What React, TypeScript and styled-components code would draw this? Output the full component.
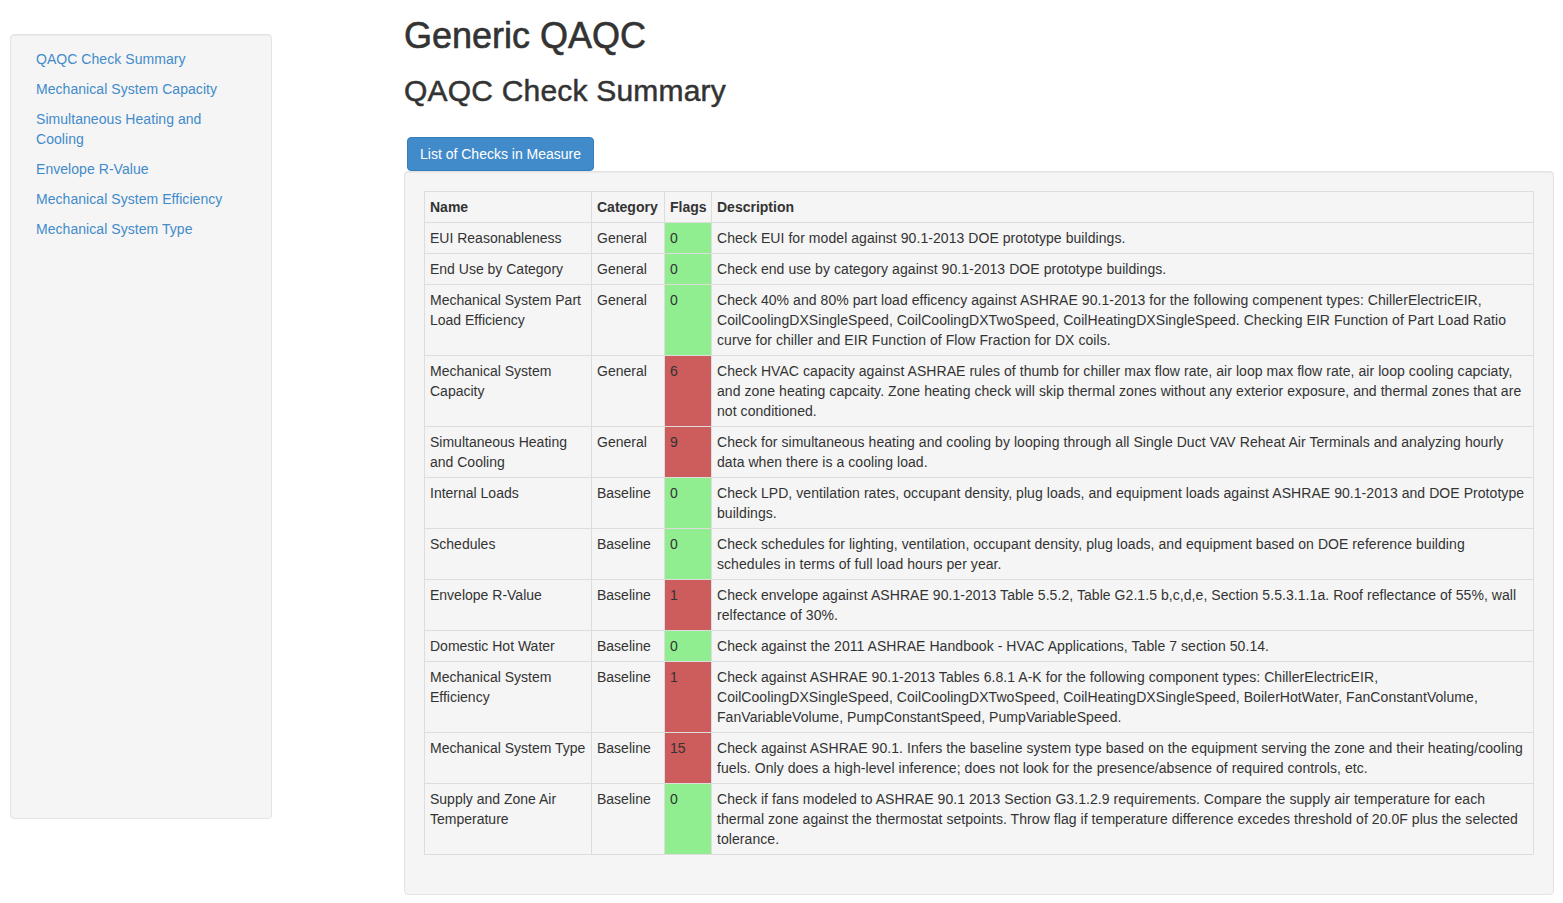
import React from "react";
import styled, { createGlobalStyle } from "styled-components";

const GlobalStyle = createGlobalStyle`
  html, body { margin: 0; padding: 0; background: #fff; }
  body {
    font-family: "Liberation Sans", Arial, Helvetica, sans-serif;
    font-size: 14px;
    line-height: 20px;
    color: #333;
  }
  * { box-sizing: border-box; }
`;

const Page = styled.div`
  display: flex;
  align-items: flex-start;
  padding: 0 9px 0 10px;
  gap: 132px;
`;

const Sidebar = styled.nav`
  flex: 0 0 262px;
  height: 785px;
  margin-top: 34px;
  background: #f5f5f5;
  border: 1px solid #e3e3e3;
  border-radius: 4px;
  box-shadow: inset 0 1px 1px rgba(0, 0, 0, 0.05);
  padding: 9px 0;
`;

const NavList = styled.ul`
  list-style: none;
  margin: 0;
  padding: 0;
  display: flex;
  flex-direction: column;
`;

const NavLink = styled.a`
  display: block;
  padding: 5px 25px;
  color: #428bca;
  text-decoration: none;
  font-size: 14px;
  line-height: 20px;
  letter-spacing: 0.05px;
`;

const Main = styled.main`
  flex: 1;
  min-width: 0;
`;

const Title = styled.h1`
  font-size: 36px;
  line-height: 40px;
  font-weight: 500;
  margin: 16px 0 0;
  color: #333;
  -webkit-text-stroke: 0.6px #333;
`;

const Subtitle = styled.h2`
  font-size: 30px;
  line-height: 33px;
  font-weight: 500;
  margin: 18px 0 0;
  color: #333;
  letter-spacing: 0.2px;
  -webkit-text-stroke: 0.5px #333;
`;

const TabButton = styled.button`
  display: block;
  margin: 30px 0 0 3px;
  height: 34px;
  padding: 6px 12px;
  font-family: inherit;
  font-size: 14px;
  line-height: 20px;
  color: #fff;
  background: #428bca;
  border: 1px solid #357ebd;
  border-radius: 4px;
  cursor: pointer;
`;

const Well = styled.section`
  background: #f5f5f5;
  border: 1px solid #e3e3e3;
  border-radius: 4px;
  box-shadow: inset 0 1px 1px rgba(0, 0, 0, 0.05);
  padding: 19px 19px 39px;
`;

const Table = styled.table`
  width: 100%;
  table-layout: fixed;
  border-collapse: collapse;
  border: 1px solid #ddd;
`;

const Th = styled.th`
  text-align: left;
  font-weight: bold;
  padding: 5px;
  border: 1px solid #ddd;
  vertical-align: top;
  line-height: 20px;
`;

const Td = styled.td`
  padding: 5px;
  border: 1px solid #ddd;
  vertical-align: top;
  line-height: 20px;
`;

const DescCell = styled(Td)`
  letter-spacing: 0.06px;
`;

const FlagCell = styled(Td)<{ $bad: boolean }>`
  background: ${(p) => (p.$bad ? "#cd5c5c" : "#90ee90")};
`;

const navItems = [
  "QAQC Check Summary",
  "Mechanical System Capacity",
  "Simultaneous Heating and Cooling",
  "Envelope R-Value",
  "Mechanical System Efficiency",
  "Mechanical System Type",
];

type Row = { name: string; cat: string; flags: number; desc: string };

const rows: Row[] = [
  { name: "EUI Reasonableness", cat: "General", flags: 0, desc: "Check EUI for model against 90.1-2013 DOE prototype buildings." },
  { name: "End Use by Category", cat: "General", flags: 0, desc: "Check end use by category against 90.1-2013 DOE prototype buildings." },
  { name: "Mechanical System Part Load Efficiency", cat: "General", flags: 0, desc: "Check 40% and 80% part load efficency against ASHRAE 90.1-2013 for the following compenent types: ChillerElectricEIR, CoilCoolingDXSingleSpeed, CoilCoolingDXTwoSpeed, CoilHeatingDXSingleSpeed. Checking EIR Function of Part Load Ratio curve for chiller and EIR Function of Flow Fraction for DX coils." },
  { name: "Mechanical System Capacity", cat: "General", flags: 6, desc: "Check HVAC capacity against ASHRAE rules of thumb for chiller max flow rate, air loop max flow rate, air loop cooling capciaty, and zone heating capcaity. Zone heating check will skip thermal zones without any exterior exposure, and thermal zones that are not conditioned." },
  { name: "Simultaneous Heating and Cooling", cat: "General", flags: 9, desc: "Check for simultaneous heating and cooling by looping through all Single Duct VAV Reheat Air Terminals and analyzing hourly data when there is a cooling load." },
  { name: "Internal Loads", cat: "Baseline", flags: 0, desc: "Check LPD, ventilation rates, occupant density, plug loads, and equipment loads against ASHRAE 90.1-2013 and DOE Prototype buildings." },
  { name: "Schedules", cat: "Baseline", flags: 0, desc: "Check schedules for lighting, ventilation, occupant density, plug loads, and equipment based on DOE reference building schedules in terms of full load hours per year." },
  { name: "Envelope R-Value", cat: "Baseline", flags: 1, desc: "Check envelope against ASHRAE 90.1-2013 Table 5.5.2, Table G2.1.5 b,c,d,e, Section 5.5.3.1.1a. Roof reflectance of 55%, wall relfectance of 30%." },
  { name: "Domestic Hot Water", cat: "Baseline", flags: 0, desc: "Check against the 2011 ASHRAE Handbook - HVAC Applications, Table 7 section 50.14." },
  { name: "Mechanical System Efficiency", cat: "Baseline", flags: 1, desc: "Check against ASHRAE 90.1-2013 Tables 6.8.1 A-K for the following component types: ChillerElectricEIR, CoilCoolingDXSingleSpeed, CoilCoolingDXTwoSpeed, CoilHeatingDXSingleSpeed, BoilerHotWater, FanConstantVolume, FanVariableVolume, PumpConstantSpeed, PumpVariableSpeed." },
  { name: "Mechanical System Type", cat: "Baseline", flags: 15, desc: "Check against ASHRAE 90.1. Infers the baseline system type based on the equipment serving the zone and their heating/cooling fuels. Only does a high-level inference; does not look for the presence/absence of required controls, etc." },
  { name: "Supply and Zone Air Temperature", cat: "Baseline", flags: 0, desc: "Check if fans modeled to ASHRAE 90.1 2013 Section G3.1.2.9 requirements. Compare the supply air temperature for each thermal zone against the thermostat setpoints. Throw flag if temperature difference excedes threshold of 20.0F plus the selected tolerance." },
];

export default function App() {
  return (
    <>
      <GlobalStyle />
      <Page>
        <Sidebar>
          <NavList>
            {navItems.map((n) => (
              <li key={n}>
                <NavLink href="#">{n}</NavLink>
              </li>
            ))}
          </NavList>
        </Sidebar>
        <Main>
          <Title>Generic QAQC</Title>
          <Subtitle>QAQC Check Summary</Subtitle>
          <TabButton>List of Checks in Measure</TabButton>
          <Well>
            <Table>
              <colgroup>
                <col style={{ width: 167 }} />
                <col style={{ width: 73 }} />
                <col style={{ width: 47 }} />
                <col />
              </colgroup>
              <thead>
                <tr>
                  <Th>Name</Th>
                  <Th>Category</Th>
                  <Th>Flags</Th>
                  <Th>Description</Th>
                </tr>
              </thead>
              <tbody>
                {rows.map((r) => (
                  <tr key={r.name}>
                    <Td>{r.name}</Td>
                    <Td>{r.cat}</Td>
                    <FlagCell $bad={r.flags > 0}>{r.flags}</FlagCell>
                    <DescCell>{r.desc}</DescCell>
                  </tr>
                ))}
              </tbody>
            </Table>
          </Well>
        </Main>
      </Page>
    </>
  );
}
